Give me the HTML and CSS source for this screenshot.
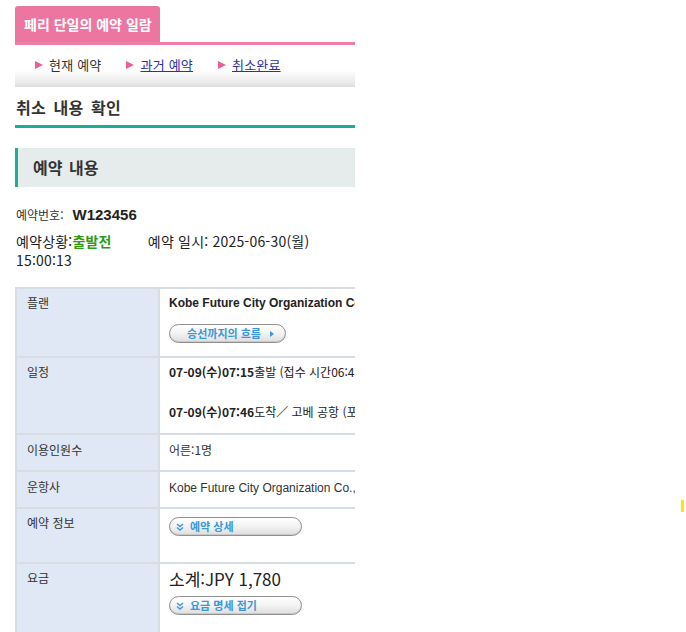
FILE: index.html
```html
<!DOCTYPE html>
<html lang="ko">
<head>
<meta charset="utf-8">
<title>페리 단일의 예약 일람</title>
<link rel="stylesheet" href="styles.css">
</head>
<body>
<div class="page">
  <div class="tabbar">
    <div class="tab">페리 단일의 예약 일람</div>
  </div>
  <nav class="subnav">
    <span class="nav-item current">현재 예약</span>
    <a class="nav-item" href="#">과거 예약</a>
    <a class="nav-item" href="#">취소완료</a>
  </nav>
  <h1 class="page-title">취소 내용 확인</h1>
  <h2 class="section-title">예약 내용</h2>
  <div class="resv-no"><span class="lbl">예약번호:</span><span class="num">W123456</span></div>
  <div class="resv-status"><span class="chunk status">예약상황:<b class="green">출발전</b></span> <span class="chunk">예약 일시: 2025-06-30(월)</span> <span class="chunk">15:00:13</span></div>
  <table class="info">
    <tr class="r-plan">
      <th>플랜</th>
      <td>
        <div class="plan-name">Kobe Future City Organization Co., Ltd.</div>
        <span class="btn btn-flow">승선까지의 흐름<i class="tri"></i></span>
      </td>
    </tr>
    <tr class="r-sched">
      <th>일정</th>
      <td>
        <div class="sched"><b>07-09(수)07:15</b>출발 (접수 시간06:45~07:05)</div>
        <div class="sched second"><b>07-09(수)07:46</b>도착／ 고베 공항 (포트 터미널)</div>
      </td>
    </tr>
    <tr class="r-small">
      <th>이용인원수</th>
      <td>어른:1명</td>
    </tr>
    <tr class="r-small">
      <th>운항사</th>
      <td><span class="latin">Kobe Future City Organization Co., Ltd.</span></td>
    </tr>
    <tr class="r-info">
      <th>예약 정보</th>
      <td><span class="btn btn-wide"><svg class="dbl" viewBox="0 0 8 8" width="8" height="8"><polyline points="1,1 4,3.5 7,1" /><polyline points="1,4.5 4,7 7,4.5" /></svg>예약 상세</span></td>
    </tr>
    <tr class="r-fee">
      <th>요금</th>
      <td>
        <div class="subtotal">소계:JPY 1,780</div>
        <span class="btn btn-wide"><svg class="dbl" viewBox="0 0 8 8" width="8" height="8"><polyline points="1,1 4,3.5 7,1" /><polyline points="1,4.5 4,7 7,4.5" /></svg>요금 명세 접기</span>
      </td>
    </tr>
  </table>
</div>
<div class="marker"></div>
</body>
</html>
```
FILE: styles.css
```css
html, body {
  margin: 0;
  padding: 0;
  background: #fff;
}
body {
  font-family: "Noto Sans CJK KR", "Liberation Sans", sans-serif;
  color: #333;
  font-size: 12px;
}
.page {
  width: 340px;
  margin-left: 15px;
  padding-top: 6px;
  overflow: hidden;
}
.tabbar {
  display: flex;
  border-bottom: 3px solid #ee7ea7;
}
.tab {
  background: #ec76a0;
  color: #fff;
  font-weight: bold;
  font-size: 14px;
  height: 36px;
  line-height: 36px;
  padding: 0 8px 0 9px;
  border-radius: 3px 3px 0 0;
}
.subnav {
  display: flex;
  align-items: flex-start;
  gap: 25px;
  padding: 12px 0 0 20px;
  height: 30px;
  font-size: 13px;
  line-height: 16px;
  background: linear-gradient(to bottom, #fff 0, #fff 60%, #f6f6f6 72%, #e8e8e8 92%, #dcdcdc 100%);
}
.nav-item {
  display: flex;
  align-items: center;
  gap: 6px;
  color: #333;
  letter-spacing: 0.2px;
}
a.nav-item {
  color: #2f2fa8;
  text-decoration: underline;
}
.nav-item::before {
  content: "";
  width: 0;
  height: 0;
  border-left: 8px solid #ea5d98;
  border-top: 4.5px solid transparent;
  border-bottom: 4.5px solid transparent;
  display: inline-block;
}
.page-title {
  margin: 0;
  font-size: 16px;
  font-weight: bold;
  color: #333;
  height: 38px;
  line-height: 40px;
  padding-left: 1px;
  word-spacing: 3px;
  letter-spacing: 0.2px;
  border-bottom: 3px solid #1bae96;
}
.section-title {
  margin: 20px 0 0;
  height: 39px;
  line-height: 38px;
  background: #e6ebeb;
  border-left: 3px solid #1bae96;
  padding-left: 15px;
  font-size: 16px;
  font-weight: bold;
  color: #333;
  word-spacing: 2px;
}
.resv-no {
  margin-top: 18px;
  height: 20px;
  line-height: 20px;
  padding-left: 1px;
  display: flex;
  align-items: baseline;
  gap: 9px;
}
.resv-no .lbl {
  font-size: 12px;
}
.resv-no .num {
  font-family: "Liberation Sans", sans-serif;
  font-size: 15px;
  font-weight: bold;
  color: #222;
}
.resv-status {
  margin-top: 7px;
  padding-left: 1px;
  font-size: 14px;
  line-height: 19px;
  color: #222;
  letter-spacing: 0.2px;
}
.chunk {
  display: inline-block;
  white-space: nowrap;
}
.status {
  margin-right: 32px;
}
.green {
  color: #2f9b14;
}
.info {
  margin-top: 17px;
  width: 600px;
  table-layout: fixed;
  border-collapse: collapse;
  font-size: 12px;
}
.info th, .info td {
  border: 2px solid #d6dde3;
  vertical-align: top;
  text-align: left;
  padding: 5px 10px 0;
  line-height: 18px;
  white-space: nowrap;
  overflow: hidden;
}
.info th {
  width: 121px;
  background: #dfe8f4;
  font-weight: normal;
  color: #333;
  padding-left: 10px;
}
.info td {
  color: #333;
  padding-left: 9px;
}
.r-plan th { height: 62px; }
.r-sched th { height: 70px; }
.r-small th { height: 29px; }
.info .r-small th, .info .r-small td { padding-top: 6px; }
.r-info th { height: 48px; }
.r-fee th { height: 80px; }
.info tr.r-fee th, .info tr.r-fee td { border-bottom: 0; }
.plan-name {
  font-family: "Liberation Sans", sans-serif;
  font-weight: bold;
  font-size: 12px;
  color: #222;
}
.sched {
  font-size: 12px;
  color: #222;
}
.sched b {
  font-weight: bold;
}
.sched.second {
  margin-top: 22px;
}
.latin {
  font-family: "Liberation Sans", sans-serif;
  font-size: 12px;
  line-height: 18px;
}
.btn {
  display: flex;
  align-items: center;
  box-sizing: border-box;
  height: 19px;
  border: 1px solid #909090;
  border-radius: 10px;
  background: linear-gradient(to bottom, #ffffff 0%, #f4f4f4 45%, #dedede 100%);
  color: #3a98d6;
  font-size: 11px;
  font-weight: bold;
  line-height: 17px;
  box-shadow: inset 0 -1px 0 #c8c8c8;
}
.btn-flow {
  width: 117px;
  margin-top: 12px;
  justify-content: center;
  gap: 9px;
  padding-left: 6px;
}
.tri {
  width: 0;
  height: 0;
  border-left: 4px solid #3a98d6;
  border-top: 3px solid transparent;
  border-bottom: 3px solid transparent;
}
.btn-wide {
  width: 133px;
  padding-left: 6px;
  gap: 6px;
  margin-top: 3px;
}
.dbl {
  fill: none;
  stroke: #3a98d6;
  stroke-width: 1.4;
}
.subtotal {
  font-size: 17px;
  line-height: 20px;
  color: #222;
}
.r-fee .btn-wide {
  margin-top: 7px;
}
.marker {
  position: absolute;
  left: 681px;
  top: 500px;
  width: 3px;
  height: 12px;
  background: #ffe400;
}
```
